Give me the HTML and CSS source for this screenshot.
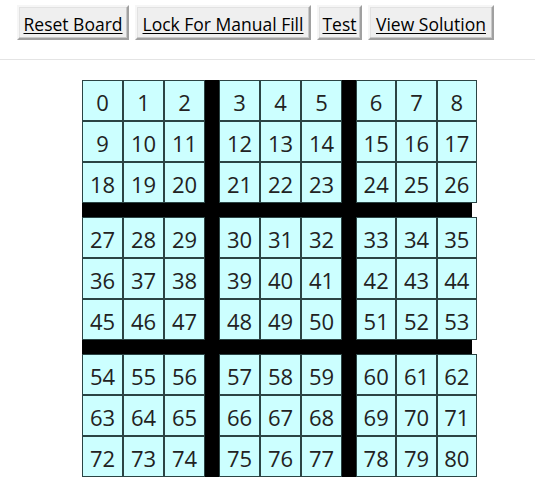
FILE: index.html
```html
<!DOCTYPE html>
<html>
<head>
<meta charset="utf-8">
<link rel="stylesheet" href="styles.css">
</head>
<body>
<div class="toolbar">
  <button class="btn btn-reset">Reset Board</button>
  <button class="btn btn-lock">Lock For Manual Fill</button>
  <button class="btn btn-test">Test</button>
  <button class="btn btn-view">View Solution</button>
</div>
<div class="rule"></div>
<div class="board">
  <div class="band">
    <div class="block"><div class="cell">0</div><div class="cell">1</div><div class="cell">2</div><div class="cell">9</div><div class="cell">10</div><div class="cell">11</div><div class="cell">18</div><div class="cell">19</div><div class="cell">20</div></div>
    <div class="vbar"></div>
    <div class="block"><div class="cell">3</div><div class="cell">4</div><div class="cell">5</div><div class="cell">12</div><div class="cell">13</div><div class="cell">14</div><div class="cell">21</div><div class="cell">22</div><div class="cell">23</div></div>
    <div class="vbar"></div>
    <div class="block narrow"><div class="cell">6</div><div class="cell">7</div><div class="cell">8</div><div class="cell">15</div><div class="cell">16</div><div class="cell">17</div><div class="cell">24</div><div class="cell">25</div><div class="cell">26</div></div>
  </div>
  <div class="hbar"></div>
  <div class="band">
    <div class="block"><div class="cell">27</div><div class="cell">28</div><div class="cell">29</div><div class="cell">36</div><div class="cell">37</div><div class="cell">38</div><div class="cell">45</div><div class="cell">46</div><div class="cell">47</div></div>
    <div class="vbar"></div>
    <div class="block"><div class="cell">30</div><div class="cell">31</div><div class="cell">32</div><div class="cell">39</div><div class="cell">40</div><div class="cell">41</div><div class="cell">48</div><div class="cell">49</div><div class="cell">50</div></div>
    <div class="vbar"></div>
    <div class="block narrow"><div class="cell">33</div><div class="cell">34</div><div class="cell">35</div><div class="cell">42</div><div class="cell">43</div><div class="cell">44</div><div class="cell">51</div><div class="cell">52</div><div class="cell">53</div></div>
  </div>
  <div class="hbar"></div>
  <div class="band">
    <div class="block"><div class="cell">54</div><div class="cell">55</div><div class="cell">56</div><div class="cell">63</div><div class="cell">64</div><div class="cell">65</div><div class="cell">72</div><div class="cell">73</div><div class="cell">74</div></div>
    <div class="vbar"></div>
    <div class="block"><div class="cell">57</div><div class="cell">58</div><div class="cell">59</div><div class="cell">66</div><div class="cell">67</div><div class="cell">68</div><div class="cell">75</div><div class="cell">76</div><div class="cell">77</div></div>
    <div class="vbar"></div>
    <div class="block narrow"><div class="cell">60</div><div class="cell">61</div><div class="cell">62</div><div class="cell">69</div><div class="cell">70</div><div class="cell">71</div><div class="cell">78</div><div class="cell">79</div><div class="cell">80</div></div>
  </div>
</div>
</body>
</html>
```

FILE: styles.css
```css
html, body {
  margin: 0;
  padding: 0;
  background: #ffffff;
  font-family: "Open Sans", "Noto Sans", sans-serif;
}

.toolbar {
  display: flex;
  gap: 6px;
  padding: 5px 0 0 17px;
}

.btn {
  height: 35px;
  padding: 2px 0 0;
  margin: 0;
  font-family: "Open Sans", "Noto Sans", sans-serif;
  font-size: 17.5px;
  color: #000;
  text-decoration: underline;
  text-decoration-thickness: 1px;
  text-underline-offset: 2px;
  background: #efefef;
  border: 2px solid;
  border-color: #f6f6f6 #a0a0a0 #a0a0a0 #f6f6f6;
  box-shadow: inset -1px -1px 0 #c8c8c8, inset 1px 1px 0 #e2e2e2;
  white-space: nowrap;
  text-align: center;
}

.btn-reset { width: 112px; }
.btn-lock { width: 176px; }
.btn-test { width: 45px; }
.btn-view { width: 126px; }

.rule {
  height: 1px;
  background: #e4e4e4;
  margin-top: 19px;
}

.board {
  margin: 20px 0 0 82px;
  width: 395px;
}

.band {
  display: flex;
  height: 123px;
}

.block {
  width: 123px;
  display: grid;
  grid-template-columns: repeat(3, 1fr);
  grid-template-rows: repeat(3, 1fr);
}

.block.narrow {
  width: 121px;
}

.vbar {
  width: 14px;
  background: #000;
}

.hbar {
  width: 390px;
  height: 14px;
  background: #000;
}

.cell {
  box-sizing: border-box;
  border: 1px solid #2b4444;
  background: #ccffff;
  color: #222;
  font-size: 22px;
  display: flex;
  align-items: center;
  justify-content: center;
  padding-top: 2px;
}
```
